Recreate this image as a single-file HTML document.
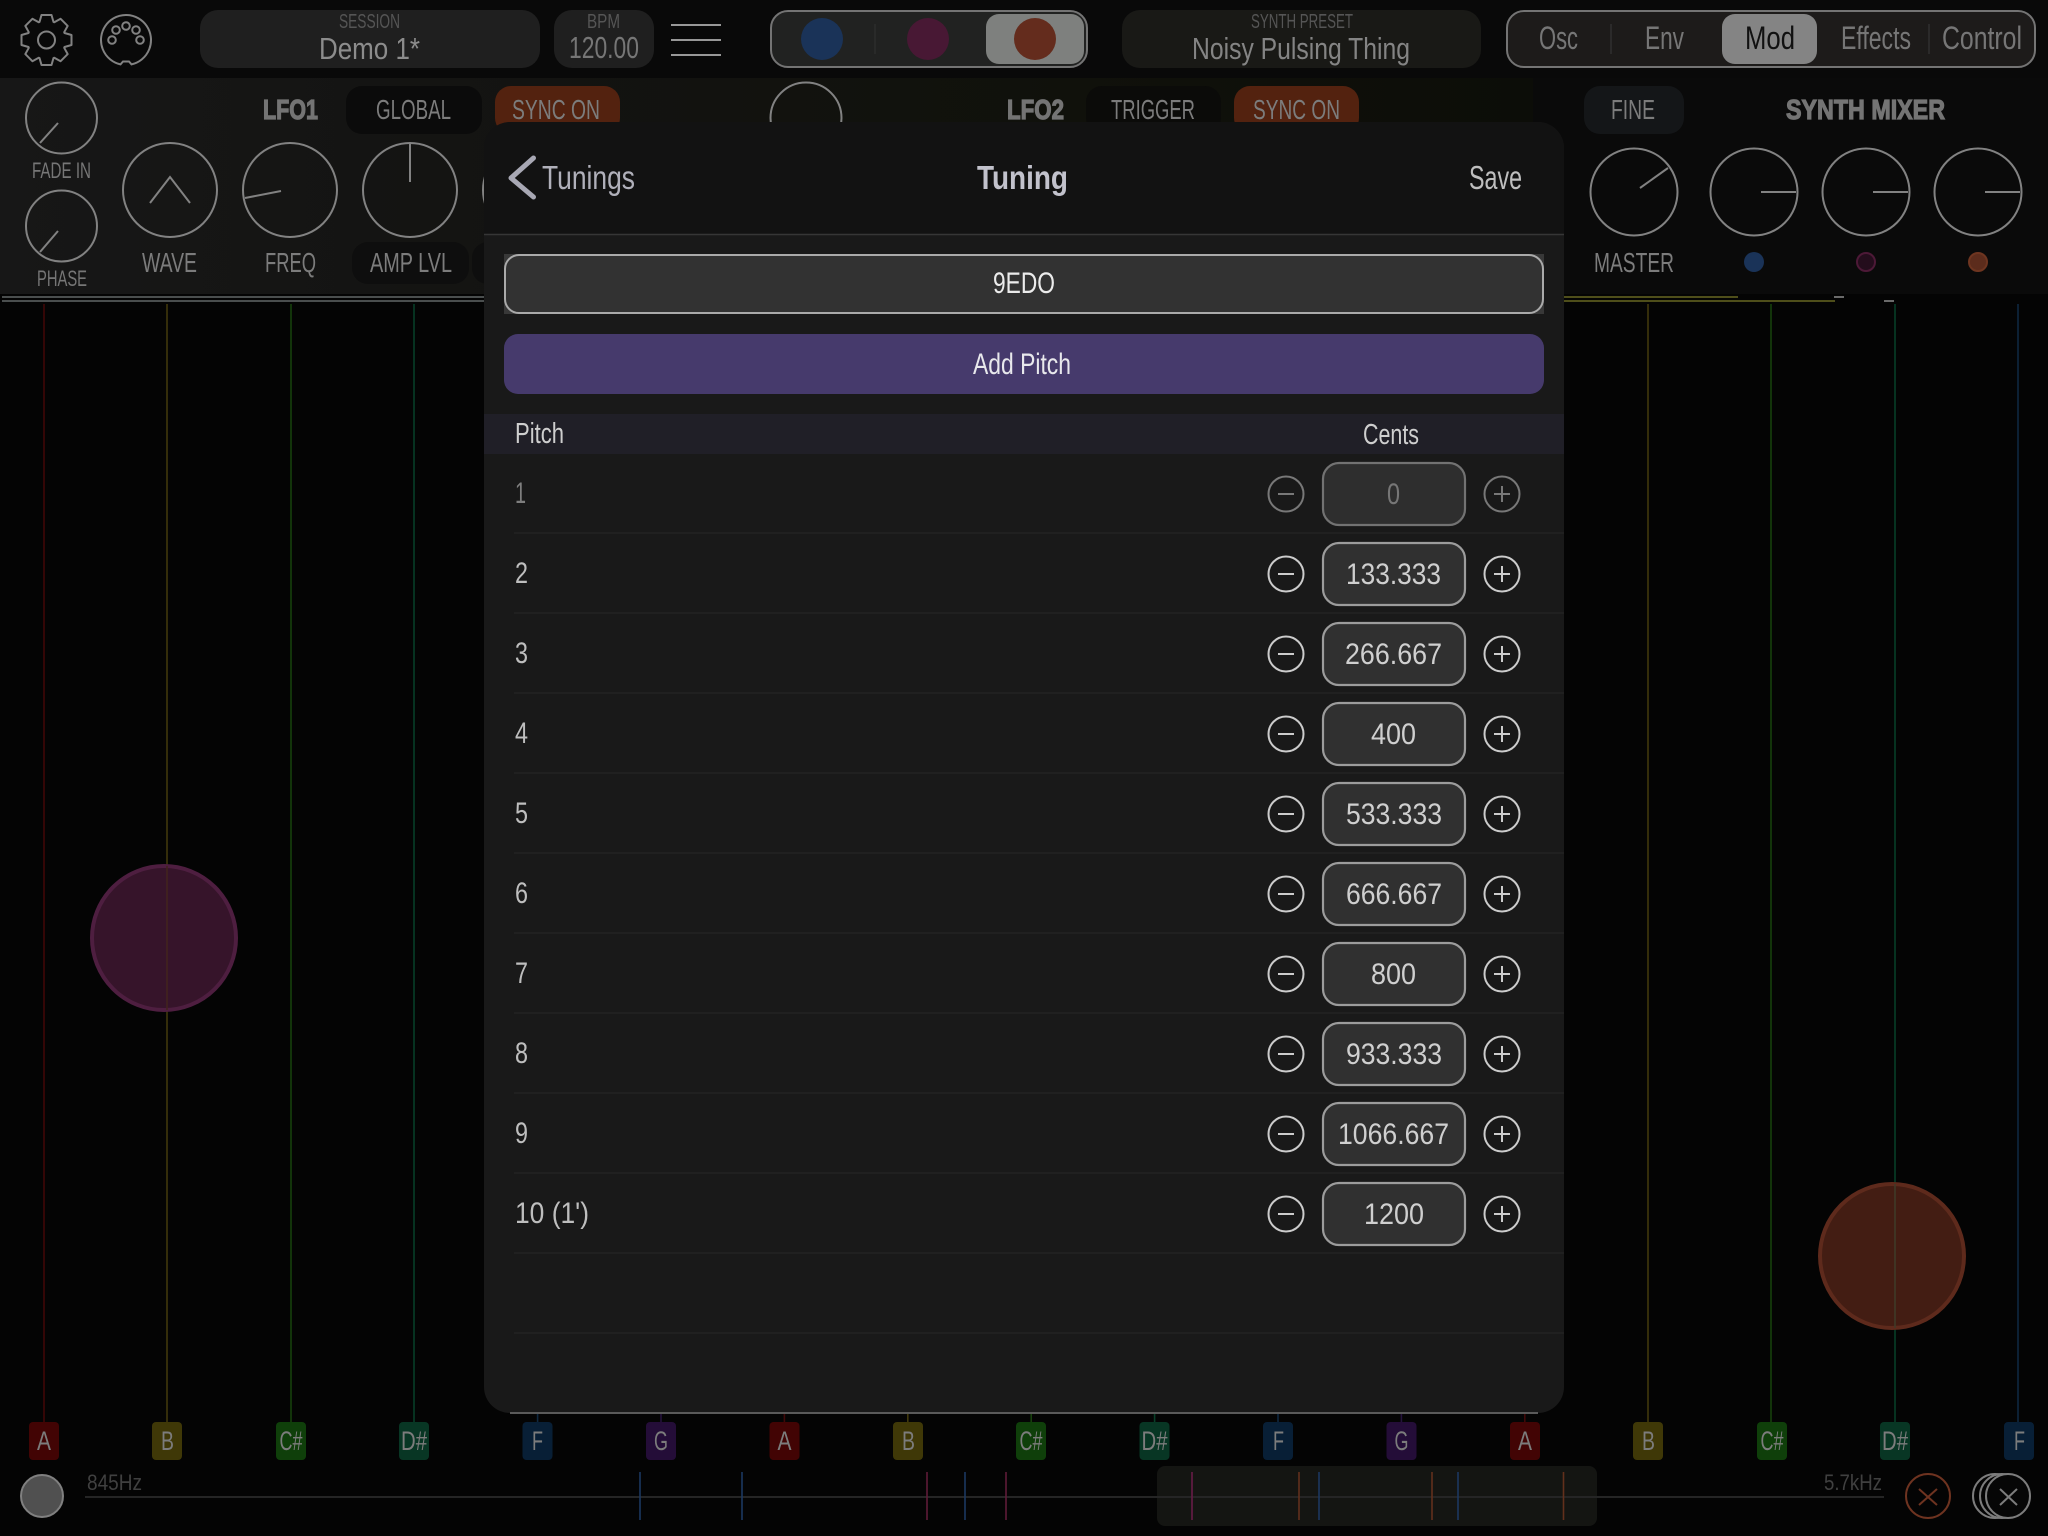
<!DOCTYPE html>
<html>
<head>
<meta charset="utf-8">
<title>Tuning</title>
<style>
html,body{margin:0;padding:0;background:#040404;width:2048px;height:1536px;overflow:hidden}
svg{display:block}
text{font-family:"Liberation Sans",sans-serif}
.k{fill:none;stroke:#828282;stroke-width:2}
.p{fill:none;stroke:#828282;stroke-width:2}
.l{fill:#7c7c7c;font-size:28px}
.s{fill:#555;font-size:20px}
.b{fill:#747474;font-size:28px;font-weight:bold;stroke:#747474;stroke-width:1.2}
.tag{fill:#7c7c7c;font-size:27px}
.row{fill:#bebebe;font-size:30px}
.val{fill:#cfcfcf;font-size:30px}
.c{fill:none;stroke:#cccccc;stroke-width:2}
.d{fill:none;stroke:#787878;stroke-width:2}
.sep{stroke:#262626;stroke-width:1}
.box{fill:#303030;stroke:#9c9c9c;stroke-width:2.2}
</style>
</head>
<body>
<svg xmlns="http://www.w3.org/2000/svg" width="2048" height="1536" viewBox="0 0 2048 1536">
<defs>
<linearGradient id="pg" x1="0" x2="1" y1="0" y2="0">
<stop offset="0" stop-color="#171717"/><stop offset=".35" stop-color="#131311"/><stop offset=".7" stop-color="#10110b"/><stop offset="1" stop-color="#0c0d08"/>
</linearGradient>
</defs>
<rect width="2048" height="1536" fill="#040404"/>
<rect width="2048" height="78" fill="#090909"/>
<rect x="0" y="78" width="1533" height="216" fill="url(#pg)"/>
<rect x="1533" y="78" width="515" height="216" fill="#0a0a0a"/>

<!-- top bar -->
<g transform="translate(46.5,40)">
<polygon fill="none" stroke="#828282" stroke-width="2" stroke-linejoin="round" points="-7,-18 -5,-25 5,-25 7,-18 7.8,-17.7 14.1,-21.2 21.2,-14.1 17.7,-7.8 18,-7 25,-5 25,5 18,7 17.7,7.8 21.2,14.1 14.1,21.2 7.8,17.7 7,18 5,25 -5,25 -7,18 -7.8,17.7 -14.1,21.2 -21.2,14.1 -17.7,7.8 -18,7 -25,5 -25,-5 -18,-7 -17.7,-7.8 -21.2,-14.1 -14.1,-21.2 -7.8,-17.7"/>
<circle r="8.5" fill="none" stroke="#828282" stroke-width="2"/>
</g>
<g fill="none" stroke="#828282" stroke-width="2">
<path d="M120.5,64.4 A25,25 0 1 1 131.5,64.4 L129,61.5 L123,61.5 Z"/>
<circle cx="112" cy="40" r="3.8"/><circle cx="116" cy="30" r="3.8"/><circle cx="126" cy="26" r="3.8"/><circle cx="136" cy="30" r="3.8"/><circle cx="140" cy="40" r="3.8"/>
</g>
<rect x="200" y="10" width="340" height="58" rx="18" fill="#1f1f1f"/>
<text class="s" x="339" y="28" textLength="61" lengthAdjust="spacingAndGlyphs">SESSION</text>
<text x="319" y="59" font-size="31" fill="#8c8c8c" textLength="101" lengthAdjust="spacingAndGlyphs">Demo 1*</text>
<rect x="554" y="10" width="100" height="58" rx="18" fill="#1f1f1f"/>
<text class="s" x="587" y="28" textLength="33" lengthAdjust="spacingAndGlyphs">BPM</text>
<text x="569" y="58" font-size="31" fill="#767676" textLength="70" lengthAdjust="spacingAndGlyphs">120.00</text>
<path d="M671,25H721M671,40H721M671,55H721" stroke="#989898" stroke-width="2"/>

<rect x="771" y="11" width="316" height="56" rx="17" fill="#212221" stroke="#747474" stroke-width="2"/>
<path d="M875,24V54" stroke="#2c2c2c" stroke-width="1.5"/>
<rect x="986" y="14" width="98" height="50" rx="13" fill="#7e807e"/>
<circle cx="822" cy="39" r="21" fill="#1a3358"/>
<circle cx="928" cy="39" r="21" fill="#481834"/>
<circle cx="1035" cy="39" r="21" fill="#642c1d"/>

<rect x="1122" y="10" width="359" height="58" rx="18" fill="#191916"/>
<text class="s" x="1251" y="28" textLength="102" lengthAdjust="spacingAndGlyphs">SYNTH PRESET</text>
<text x="1192" y="59" font-size="31" fill="#848484" textLength="218" lengthAdjust="spacingAndGlyphs">Noisy Pulsing Thing</text>

<rect x="1507" y="11" width="528" height="56" rx="17" fill="#1d1b1a" stroke="#747474" stroke-width="2"/>
<path d="M1611,24V54M1929,24V54" stroke="#303030" stroke-width="1.5"/>
<rect x="1722" y="14" width="95" height="50" rx="13" fill="#848484"/>
<g font-size="32" fill="#767676">
<text x="1539" y="49" textLength="39" lengthAdjust="spacingAndGlyphs">Osc</text>
<text x="1645" y="49" textLength="39" lengthAdjust="spacingAndGlyphs">Env</text>
<text x="1745" y="49" textLength="50" lengthAdjust="spacingAndGlyphs" fill="#111">Mod</text>
<text x="1841" y="49" textLength="70" lengthAdjust="spacingAndGlyphs">Effects</text>
<text x="1942" y="49" textLength="80" lengthAdjust="spacingAndGlyphs">Control</text>
</g>

<!-- LFO1 panel -->
<circle class="k" cx="61.5" cy="118" r="35.5"/><path class="p" d="M40,143L58,123"/>
<text x="32" y="178" font-size="22" fill="#767676" textLength="59" lengthAdjust="spacingAndGlyphs">FADE IN</text>
<circle class="k" cx="61.5" cy="226" r="35.5"/><path class="p" d="M40,252L58,231"/>
<text x="37" y="286" font-size="22" fill="#767676" textLength="50" lengthAdjust="spacingAndGlyphs">PHASE</text>
<circle class="k" cx="170" cy="190" r="47"/><path class="p" d="M150,203L170,177L190,203"/>
<text class="l" x="142" y="272" textLength="55" lengthAdjust="spacingAndGlyphs">WAVE</text>
<circle class="k" cx="290" cy="190" r="47"/><path class="p" d="M245,198L281,191"/>
<text class="l" x="265" y="272" textLength="51" lengthAdjust="spacingAndGlyphs">FREQ</text>
<rect x="352" y="242" width="117" height="42" rx="16" fill="#0e0e0e"/>
<rect x="472" y="242" width="40" height="42" rx="16" fill="#0e0e0e"/>
<circle class="k" cx="410" cy="190" r="47"/><path class="p" d="M410,143V182"/>
<text class="l" x="370" y="272" textLength="82" lengthAdjust="spacingAndGlyphs">AMP LVL</text>
<circle class="k" cx="530" cy="190" r="47"/>
<text class="b" x="263" y="119" textLength="55" lengthAdjust="spacingAndGlyphs">LFO1</text>
<rect x="346" y="86" width="136" height="48" rx="16" fill="#0b0b0b"/>
<text class="l" x="376" y="119" textLength="75" lengthAdjust="spacingAndGlyphs">GLOBAL</text>
<rect x="495" y="86" width="125" height="48" rx="16" fill="#53220f"/>
<text class="l" x="512" y="119" textLength="88" lengthAdjust="spacingAndGlyphs" fill="#857d72">SYNC ON</text>

<!-- LFO2 panel -->
<circle class="k" cx="806" cy="118" r="35.5"/>
<text class="b" x="1007" y="119" textLength="57" lengthAdjust="spacingAndGlyphs">LFO2</text>
<rect x="1086" y="86" width="135" height="48" rx="16" fill="#0b0b09"/>
<text class="l" x="1111" y="119" textLength="84" lengthAdjust="spacingAndGlyphs">TRIGGER</text>
<rect x="1234" y="86" width="125" height="48" rx="16" fill="#53220f"/>
<text class="l" x="1253" y="119" textLength="87" lengthAdjust="spacingAndGlyphs" fill="#857d72">SYNC ON</text>

<!-- right panel -->
<rect x="1584" y="86" width="100" height="48" rx="16" fill="#141618"/>
<text class="l" x="1611" y="119" textLength="44" lengthAdjust="spacingAndGlyphs">FINE</text>
<text class="b" x="1786" y="119" textLength="159" lengthAdjust="spacingAndGlyphs">SYNTH MIXER</text>
<circle class="k" cx="1634" cy="192" r="43.5"/><path class="p" d="M1640,188L1668,168"/>
<text class="l" x="1594" y="272" textLength="80" lengthAdjust="spacingAndGlyphs">MASTER</text>
<circle class="k" cx="1754" cy="192" r="43.5"/><path class="p" d="M1761,192H1796"/>
<circle class="k" cx="1866" cy="192" r="43.5"/><path class="p" d="M1873,192H1908"/>
<circle class="k" cx="1978" cy="192" r="43.5"/><path class="p" d="M1985,192H2020"/>
<circle cx="1754" cy="262" r="10" fill="#1a3358"/>
<circle cx="1866" cy="262" r="9" fill="#240d1c" stroke="#4d1937" stroke-width="2"/>
<circle cx="1978" cy="262" r="9" fill="#5c2c1c" stroke="#6e3520" stroke-width="2"/>

<!-- double lines -->
<path d="M2,297H500M2,301H500" stroke="#4a4e4e" stroke-width="2"/>
<path d="M1560,297H1738M1560,301H1835" stroke="#4e4e1a" stroke-width="2"/>
<path d="M1834,297H1844M1884,301H1894" stroke="#6a6a6a" stroke-width="2"/>

<!-- vertical lines -->
<g stroke-width="1.6" fill="none">
<path d="M44,304V1422" stroke="#400808"/>
<path d="M167,304V1422" stroke="#40380c"/>
<path d="M291,304V1422" stroke="#16400c"/>
<path d="M414,304V1422" stroke="#083f28"/>
<path d="M537.6,1400V1422" stroke="#0f2840"/>
<path d="M661,1400V1422" stroke="#24123c"/>
<path d="M784.4,1400V1422" stroke="#400808"/>
<path d="M907.8,1400V1422" stroke="#40380c"/>
<path d="M1031.2,1400V1422" stroke="#16400c"/>
<path d="M1154.6,1400V1422" stroke="#083f28"/>
<path d="M1278,1400V1422" stroke="#0f2840"/>
<path d="M1401.4,1400V1422" stroke="#24123c"/>
<path d="M1524.8,1400V1422" stroke="#400808"/>
<path d="M1648,304V1422" stroke="#40380c"/>
<path d="M1771,304V1422" stroke="#16400c"/>
<path d="M1895,304V1422" stroke="#083f28"/>
<path d="M2018,304V1422" stroke="#0f2840"/>
</g>

<!-- blobs -->
<circle cx="164" cy="938" r="72" fill="#36142a" stroke="#4e1e40" stroke-width="4"/>
<path d="M167,866V1010" stroke="#42241e" stroke-width="1.6"/>
<circle cx="1892" cy="1256" r="72" fill="#431d13" stroke="#5e2a1c" stroke-width="4"/>
<path d="M1895,1184V1328" stroke="#403a28" stroke-width="1.6"/>

<!-- note tags -->
<g>
<rect x="29" y="1422" width="30" height="38" rx="4" fill="#420404"/>
<rect x="152" y="1422" width="30" height="38" rx="4" fill="#3f3807"/>
<rect x="276" y="1422" width="30" height="38" rx="4" fill="#0f3f0a"/>
<rect x="399" y="1422" width="30" height="38" rx="4" fill="#083624"/>
<rect x="522.5" y="1422" width="30" height="38" rx="4" fill="#081f36"/>
<rect x="646" y="1422" width="30" height="38" rx="4" fill="#240d38"/>
<rect x="769.5" y="1422" width="30" height="38" rx="4" fill="#420404"/>
<rect x="893" y="1422" width="30" height="38" rx="4" fill="#3f3807"/>
<rect x="1016" y="1422" width="30" height="38" rx="4" fill="#0f3f0a"/>
<rect x="1139.5" y="1422" width="30" height="38" rx="4" fill="#083624"/>
<rect x="1263" y="1422" width="30" height="38" rx="4" fill="#081f36"/>
<rect x="1386.5" y="1422" width="30" height="38" rx="4" fill="#240d38"/>
<rect x="1510" y="1422" width="30" height="38" rx="4" fill="#420404"/>
<rect x="1633" y="1422" width="30" height="38" rx="4" fill="#3f3807"/>
<rect x="1757" y="1422" width="30" height="38" rx="4" fill="#0f3f0a"/>
<rect x="1880" y="1422" width="30" height="38" rx="4" fill="#083624"/>
<rect x="2004" y="1422" width="30" height="38" rx="4" fill="#081f36"/>
</g>
<g>
<text class="tag" x="37" y="1450" textLength="14" lengthAdjust="spacingAndGlyphs">A</text>
<text class="tag" x="161" y="1450" textLength="13" lengthAdjust="spacingAndGlyphs">B</text>
<text class="tag" x="279.5" y="1450" textLength="23" lengthAdjust="spacingAndGlyphs">C#</text>
<text class="tag" x="401" y="1450" textLength="26" lengthAdjust="spacingAndGlyphs">D#</text>
<text class="tag" x="532" y="1450" textLength="11" lengthAdjust="spacingAndGlyphs">F</text>
<text class="tag" x="654" y="1450" textLength="14" lengthAdjust="spacingAndGlyphs">G</text>
<text class="tag" x="777.5" y="1450" textLength="14" lengthAdjust="spacingAndGlyphs">A</text>
<text class="tag" x="902" y="1450" textLength="13" lengthAdjust="spacingAndGlyphs">B</text>
<text class="tag" x="1019.5" y="1450" textLength="23" lengthAdjust="spacingAndGlyphs">C#</text>
<text class="tag" x="1141.5" y="1450" textLength="26" lengthAdjust="spacingAndGlyphs">D#</text>
<text class="tag" x="1273" y="1450" textLength="11" lengthAdjust="spacingAndGlyphs">F</text>
<text class="tag" x="1394.5" y="1450" textLength="14" lengthAdjust="spacingAndGlyphs">G</text>
<text class="tag" x="1518" y="1450" textLength="14" lengthAdjust="spacingAndGlyphs">A</text>
<text class="tag" x="1642" y="1450" textLength="13" lengthAdjust="spacingAndGlyphs">B</text>
<text class="tag" x="1760.5" y="1450" textLength="23" lengthAdjust="spacingAndGlyphs">C#</text>
<text class="tag" x="1882" y="1450" textLength="26" lengthAdjust="spacingAndGlyphs">D#</text>
<text class="tag" x="2014" y="1450" textLength="11" lengthAdjust="spacingAndGlyphs">F</text>
</g>

<!-- bottom strip -->
<rect x="1157" y="1466" width="440" height="60" rx="8" fill="#141512"/>
<path d="M85,1497H1884" stroke="#252525" stroke-width="2"/>
<circle cx="42" cy="1496" r="21" fill="#505050" stroke="#808080" stroke-width="2"/>
<text x="87" y="1490" font-size="22" fill="#404040" textLength="55" lengthAdjust="spacingAndGlyphs">845Hz</text>
<text x="1824" y="1490" font-size="22" fill="#404040" textLength="58" lengthAdjust="spacingAndGlyphs">5.7kHz</text>
<g stroke-width="1.6">
<path d="M640,1472V1520M742,1472V1520M965,1472V1520M1319,1472V1520M1458,1472V1520" stroke="#1c3860"/>
<path d="M927,1472V1520M1006,1472V1520" stroke="#5e1c38"/>
<path d="M1192,1472V1520" stroke="#661c46"/>
<path d="M1299,1472V1520M1432,1472V1520M1563.5,1472V1520" stroke="#62301c"/>
</g>
<circle cx="1928" cy="1496" r="22" fill="none" stroke="#6e3320" stroke-width="2"/>
<path d="M1919,1489L1937,1505M1937,1489L1919,1505" stroke="#6e3320" stroke-width="2"/>
<g fill="none" stroke="#7c7c7c" stroke-width="2">
<circle cx="1995" cy="1496" r="22"/>
<circle cx="2002" cy="1496" r="22"/>
<circle cx="2008" cy="1496" r="22" fill="#060606"/>
<path d="M2000,1489L2017,1505M2017,1489L2000,1505"/>
</g>

<!-- modal -->
<rect x="484" y="122" width="1080" height="1291" rx="26" fill="#191919"/>
<path d="M484,234V148A26,26 0 0 1 510,122H1538A26,26 0 0 1 1564,148V234Z" fill="#121212"/>
<path d="M484,234.5H1564" stroke="#363636" stroke-width="1.5"/>
<path d="M510,1413H1538" stroke="#5a5a5a" stroke-width="2"/>
<path d="M533.5,158L511,178L533.5,197" fill="none" stroke="#a8a8b4" stroke-width="5" stroke-linejoin="round" stroke-linecap="round"/>
<text x="542" y="189" font-size="33" fill="#b0b0ba" textLength="93" lengthAdjust="spacingAndGlyphs">Tunings</text>
<text x="977" y="189" font-size="33" font-weight="bold" fill="#c2c2cc" textLength="91" lengthAdjust="spacingAndGlyphs">Tuning</text>
<text x="1469" y="189" font-size="33" fill="#bebebe" textLength="53" lengthAdjust="spacingAndGlyphs">Save</text>

<rect x="504" y="254" width="1040" height="60" fill="#383838"/>
<rect x="505" y="255" width="1038" height="58" rx="14" fill="#323232" stroke="#aaaaaa" stroke-width="2"/>
<text x="993" y="293" font-size="30" fill="#ebebeb" textLength="62" lengthAdjust="spacingAndGlyphs">9EDO</text>
<rect x="504" y="334" width="1040" height="60" rx="14" fill="#463a6c"/>
<text x="973" y="374" font-size="30" fill="#e8e8ec" textLength="98" lengthAdjust="spacingAndGlyphs">Add Pitch</text>
<rect x="484" y="414" width="1080" height="40" fill="#201f27"/>
<text x="515" y="443" font-size="29" fill="#cecece" textLength="49" lengthAdjust="spacingAndGlyphs">Pitch</text>
<text x="1363" y="444" font-size="29" fill="#cecece" textLength="56" lengthAdjust="spacingAndGlyphs">Cents</text>

<path class="sep" d="M514,533H1564M514,613H1564M514,693H1564M514,773H1564M514,853H1564M514,933H1564M514,1013H1564M514,1093H1564M514,1173H1564M514,1253H1564M514,1333H1564"/>

<!-- rows -->
<text x="515" y="503" font-size="30" fill="#7e7e7e" textLength="11" lengthAdjust="spacingAndGlyphs">1</text>
<text class="row" x="515" y="583" textLength="13" lengthAdjust="spacingAndGlyphs">2</text>
<text class="row" x="515" y="663" textLength="13" lengthAdjust="spacingAndGlyphs">3</text>
<text class="row" x="515" y="743" textLength="13" lengthAdjust="spacingAndGlyphs">4</text>
<text class="row" x="515" y="823" textLength="13" lengthAdjust="spacingAndGlyphs">5</text>
<text class="row" x="515" y="903" textLength="13" lengthAdjust="spacingAndGlyphs">6</text>
<text class="row" x="515" y="983" textLength="13" lengthAdjust="spacingAndGlyphs">7</text>
<text class="row" x="515" y="1063" textLength="13" lengthAdjust="spacingAndGlyphs">8</text>
<text class="row" x="515" y="1143" textLength="13" lengthAdjust="spacingAndGlyphs">9</text>
<text class="row" x="515" y="1223" textLength="74" lengthAdjust="spacingAndGlyphs">10 (1')</text>

<g>
<rect x="1323" y="463" width="142" height="62" rx="16" fill="#2e2e2e" stroke="#727272" stroke-width="2.2"/>
<rect class="box" x="1323" y="543" width="142" height="62" rx="16"/>
<rect class="box" x="1323" y="623" width="142" height="62" rx="16"/>
<rect class="box" x="1323" y="703" width="142" height="62" rx="16"/>
<rect class="box" x="1323" y="783" width="142" height="62" rx="16"/>
<rect class="box" x="1323" y="863" width="142" height="62" rx="16"/>
<rect class="box" x="1323" y="943" width="142" height="62" rx="16"/>
<rect class="box" x="1323" y="1023" width="142" height="62" rx="16"/>
<rect class="box" x="1323" y="1103" width="142" height="62" rx="16"/>
<rect class="box" x="1323" y="1183" width="142" height="62" rx="16"/>
</g>
<text x="1387" y="504" font-size="30" fill="#767676" textLength="13" lengthAdjust="spacingAndGlyphs">0</text>
<text class="val" x="1346" y="584" textLength="95" lengthAdjust="spacingAndGlyphs">133.333</text>
<text class="val" x="1345" y="664" textLength="97" lengthAdjust="spacingAndGlyphs">266.667</text>
<text class="val" x="1371" y="744" textLength="45" lengthAdjust="spacingAndGlyphs">400</text>
<text class="val" x="1346" y="824" textLength="96" lengthAdjust="spacingAndGlyphs">533.333</text>
<text class="val" x="1346" y="904" textLength="96" lengthAdjust="spacingAndGlyphs">666.667</text>
<text class="val" x="1371" y="984" textLength="45" lengthAdjust="spacingAndGlyphs">800</text>
<text class="val" x="1346" y="1064" textLength="96" lengthAdjust="spacingAndGlyphs">933.333</text>
<text class="val" x="1338" y="1144" textLength="111" lengthAdjust="spacingAndGlyphs">1066.667</text>
<text class="val" x="1364" y="1224" textLength="60" lengthAdjust="spacingAndGlyphs">1200</text>

<!-- minus / plus -->
<circle class="d" cx="1286" cy="494" r="17.5"/><path class="d" d="M1278,494H1294"/>
<circle class="d" cx="1502" cy="494" r="17.5"/><path class="d" d="M1494,494H1510M1502,486V502"/>
<circle class="c" cx="1286" cy="574" r="17.5"/><path class="c" d="M1278,574H1294"/><circle class="c" cx="1502" cy="574" r="17.5"/><path class="c" d="M1494,574H1510M1502,566V582"/>
<circle class="c" cx="1286" cy="654" r="17.5"/><path class="c" d="M1278,654H1294"/><circle class="c" cx="1502" cy="654" r="17.5"/><path class="c" d="M1494,654H1510M1502,646V662"/>
<circle class="c" cx="1286" cy="734" r="17.5"/><path class="c" d="M1278,734H1294"/><circle class="c" cx="1502" cy="734" r="17.5"/><path class="c" d="M1494,734H1510M1502,726V742"/>
<circle class="c" cx="1286" cy="814" r="17.5"/><path class="c" d="M1278,814H1294"/><circle class="c" cx="1502" cy="814" r="17.5"/><path class="c" d="M1494,814H1510M1502,806V822"/>
<circle class="c" cx="1286" cy="894" r="17.5"/><path class="c" d="M1278,894H1294"/><circle class="c" cx="1502" cy="894" r="17.5"/><path class="c" d="M1494,894H1510M1502,886V902"/>
<circle class="c" cx="1286" cy="974" r="17.5"/><path class="c" d="M1278,974H1294"/><circle class="c" cx="1502" cy="974" r="17.5"/><path class="c" d="M1494,974H1510M1502,966V982"/>
<circle class="c" cx="1286" cy="1054" r="17.5"/><path class="c" d="M1278,1054H1294"/><circle class="c" cx="1502" cy="1054" r="17.5"/><path class="c" d="M1494,1054H1510M1502,1046V1062"/>
<circle class="c" cx="1286" cy="1134" r="17.5"/><path class="c" d="M1278,1134H1294"/><circle class="c" cx="1502" cy="1134" r="17.5"/><path class="c" d="M1494,1134H1510M1502,1126V1142"/>
<circle class="c" cx="1286" cy="1214" r="17.5"/><path class="c" d="M1278,1214H1294"/><circle class="c" cx="1502" cy="1214" r="17.5"/><path class="c" d="M1494,1214H1510M1502,1206V1222"/>
</svg>
</body>
</html>
